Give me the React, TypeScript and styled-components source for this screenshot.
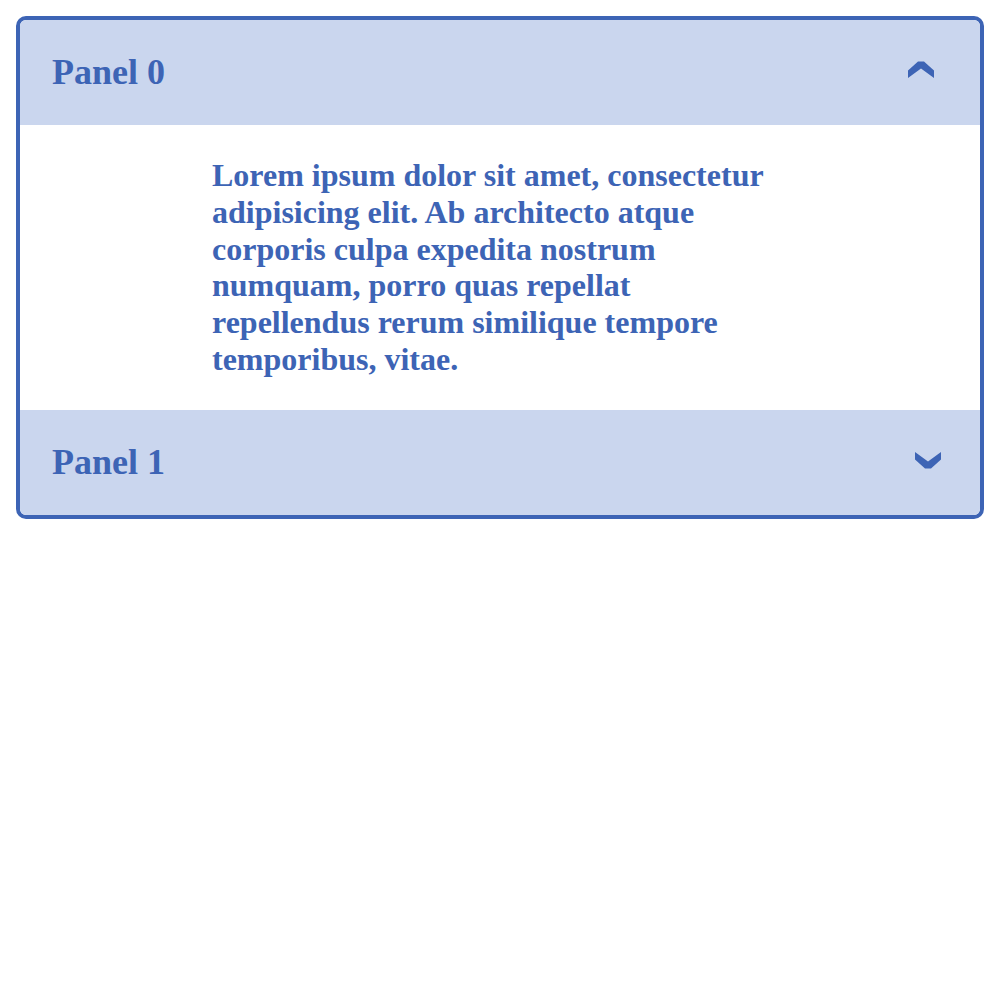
import React, { useState } from "react";
import styled, { createGlobalStyle } from "styled-components";

const Global = createGlobalStyle`
  html, body { margin: 0; padding: 0; background: #ffffff; }
  body { font-family: "Liberation Serif", "Times New Roman", serif; }
`;

const BLUE = "#3d64b5";
const LIGHT = "#cad6ee";

const Page = styled.div`
  padding: 16px;
`;

const Accordion = styled.div`
  border: 4px solid ${BLUE};
  border-radius: 10px;
  overflow: hidden;
  background: #ffffff;
`;

const PanelHeader = styled.button`
  display: flex;
  align-items: center;
  justify-content: space-between;
  width: 100%;
  height: 105px;
  padding: 0 32px;
  margin: 0;
  border: none;
  background: ${LIGHT};
  color: ${BLUE};
  cursor: pointer;
  font: inherit;
  text-align: left;
`;

const PanelTitle = styled.span`
  font-family: "Liberation Serif", "Times New Roman", serif;
  font-weight: 700;
  font-size: 36px;
  line-height: 1.15;
  color: ${BLUE};
`;

const Chevron = styled.svg<{ $shiftRight: number; $shiftUp: number }>`
  display: block;
  width: 26px;
  height: 18px;
  margin-right: ${(p) => p.$shiftRight}px;
  margin-bottom: ${(p) => p.$shiftUp}px;
  fill: ${BLUE};
`;

const PanelBody = styled.div`
  padding: 32px 0;
  background: #ffffff;
`;

const BodyText = styled.p`
  width: 60%;
  margin: 0 auto;
  font-family: "Liberation Serif", "Times New Roman", serif;
  font-weight: 700;
  font-size: 32px;
  line-height: 36.8px;
  color: ${BLUE};
`;

const UpChevron = () => (
  <Chevron viewBox="0 0 26 18" $shiftRight={14} $shiftUp={5}>
    <polygon points="0,9.5 10,0.5 16,0.5 26,9.5 26,17 13,7.5 0,17" />
  </Chevron>
);

const DownChevron = () => (
  <Chevron viewBox="0 0 26 18" $shiftRight={7} $shiftUp={4}>
    <polygon points="0,1 13,10.5 26,1 26,8.5 16,17.5 10,17.5 0,8.5" />
  </Chevron>
);

const panels = [
  {
    title: "Panel 0",
    body:
      "Lorem ipsum dolor sit amet, consectetur adipisicing elit. Ab architecto atque corporis culpa expedita nostrum numquam, porro quas repellat repellendus rerum similique tempore temporibus, vitae.",
  },
  {
    title: "Panel 1",
    body:
      "Lorem ipsum dolor sit amet, consectetur adipisicing elit. Ab architecto atque corporis culpa expedita nostrum numquam, porro quas repellat repellendus rerum similique tempore temporibus, vitae.",
  },
];

export default function App() {
  const [open, setOpen] = useState<number>(0);
  return (
    <Page>
      <Global />
      <Accordion>
        {panels.map((p, i) => (
          <React.Fragment key={p.title}>
            <PanelHeader onClick={() => setOpen(open === i ? -1 : i)}>
              <PanelTitle>{p.title}</PanelTitle>
              {open === i ? <UpChevron /> : <DownChevron />}
            </PanelHeader>
            {open === i && (
              <PanelBody>
                <BodyText>{p.body}</BodyText>
              </PanelBody>
            )}
          </React.Fragment>
        ))}
      </Accordion>
    </Page>
  );
}
